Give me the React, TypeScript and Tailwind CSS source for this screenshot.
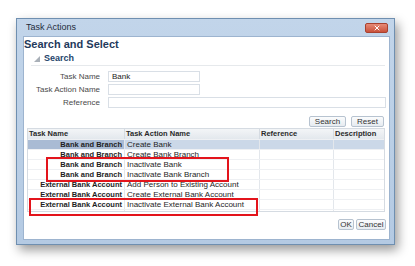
import { X } from 'lucide-react';

const rows = [
  { task: 'Bank and Branch', action: 'Create Bank', selected: true },
  { task: 'Bank and Branch', action: 'Create Bank Branch' },
  { task: 'Bank and Branch', action: 'Inactivate Bank' },
  { task: 'Bank and Branch', action: 'Inactivate Bank Branch' },
  { task: 'External Bank Account', action: 'Add Person to Existing Account' },
  { task: 'External Bank Account', action: 'Create External Bank Account' },
  { task: 'External Bank Account', action: 'Inactivate External Bank Account' },
];

function FormRow({ label, value, wide }: { label: string; value?: string; wide?: boolean }) {
  return (
    <div className="flex h-[13px] items-center">
      <div className="w-[77px] pr-px text-right text-[8px] leading-none text-[#4a4a4a]">{label}</div>
      <div
        className={
          'ml-[7px] flex h-[11px] items-center border border-[#d9dfe6] bg-white px-[3px] text-[8px] leading-none text-[#222] ' +
          (wide ? 'w-[278px]' : 'w-[92px]')
        }
      >
        {value}
      </div>
    </div>
  );
}

function Btn({ children, w }: { children: string; w: string }) {
  return (
    <div
      className={
        'flex h-[11px] items-center justify-center rounded-[2px] border border-[#b7c3d0] bg-gradient-to-b from-[#fbfcfd] to-[#e6ebf0] text-[8px] leading-none text-[#333] ' +
        w
      }
    >
      {children}
    </div>
  );
}

export default function App() {
  return (
    <div
      className="relative h-[266px] w-[415px] overflow-hidden bg-white pl-[16px] pt-[18px]"
      style={{ fontFamily: '"Liberation Sans", Arial, sans-serif' }}
    >
      {/* dialog frame */}
      <div className="flex h-[227px] w-[379px] flex-col border border-[#6f8fb0] bg-gradient-to-b from-[#c2d5ea] to-[#b4cae3] shadow-[3px_5px_10px_rgba(0,0,0,0.4)]">
        <div className="flex h-[17px] shrink-0 items-center justify-between pl-[9px] pr-[6px]">
          <span className="text-[9px] leading-none text-[#1d2b3a]">Task Actions</span>
          <div className="flex h-[10px] w-[23px] items-center justify-center rounded-[2px] border border-[#a8412f] bg-gradient-to-b from-[#e68a76] to-[#c9503a]">
            <X className="h-[8px] w-[8px] text-white" strokeWidth={3} />
          </div>
        </div>

        <div className="mb-[4px] ml-[6px] mr-[4px] flex flex-1 flex-col border border-[#9db4cf] bg-white">
          <div className="pt-px text-[11px] font-bold leading-[12px] text-[#1f3a5c]">Search and Select</div>

          <div className="ml-[7px] mr-[4px] mt-[4px] flex h-[12px] items-center border-b border-[#e6e9ec] pb-[2px]">
            <svg width="8" height="8" viewBox="0 0 8 8" className="ml-[2px]">
              <polygon points="7,1 7,7 1,7" fill="#a9b0b8" />
            </svg>
            <span className="ml-[3px] text-[9px] font-bold leading-none text-[#24446b]">Search</span>
          </div>

          <div className="mt-[4px] flex flex-col">
            <FormRow label="Task Name" value="Bank" />
            <FormRow label="Task Action Name" />
            <FormRow label="Reference" wide />
          </div>

          <div className="mr-[5px] mt-[7px] flex justify-end gap-[5px]">
            <Btn w="w-[37px]">Search</Btn>
            <Btn w="w-[33px]">Reset</Btn>
          </div>

          {/* results table */}
          <div className="ml-[3px] mt-px flex h-[84px] w-[358px] flex-col border border-[#d5dbe2]">
            <div className="grid h-[10px] shrink-0 grid-cols-[97px_135px_74px_1fr] bg-gradient-to-b from-[#f3f5f7] to-[#e3e8ed] text-[7.5px] font-bold leading-[10px] text-[#2a2a2a]">
              <div className="border-r border-[#d5dbe2] pl-px">Task Name</div>
              <div className="border-r border-[#d5dbe2] pl-px">Task Action Name</div>
              <div className="border-r border-[#d5dbe2] pl-px">Reference</div>
              <div className="pl-px">Description</div>
            </div>
            {rows.map((r, i) => (
              <div
                key={i}
                className={
                  'grid h-[10px] shrink-0 grid-cols-[97px_135px_74px_1fr] border-t border-[#eef0f3] leading-[9px] ' +
                  (r.selected ? 'bg-[#cbd8e8]' : 'bg-white')
                }
              >
                <div
                  className={
                    'overflow-hidden whitespace-nowrap border-r border-[#e3e7ec] pr-[2px] text-right text-[7.5px] font-bold text-[#1e1e1e] ' +
                    (r.selected ? 'bg-[#a9bbd4]' : '')
                  }
                >
                  {r.task}
                </div>
                <div className="overflow-hidden whitespace-nowrap border-r border-[#e3e7ec] pl-[2px] text-[8px] text-[#1e1e1e]">
                  {r.action}
                </div>
                <div className="border-r border-[#e3e7ec]" />
                <div />
              </div>
            ))}
            <div className="grid flex-1 grid-cols-[97px_135px_74px_1fr] border-t border-[#eef0f3]">
              <div className="border-r border-[#e3e7ec]" />
              <div className="border-r border-[#e3e7ec]" />
              <div className="border-r border-[#e3e7ec]" />
              <div />
            </div>
          </div>

          <div className="mr-[3px] mt-[7px] flex justify-end gap-[2px]">
            <Btn w="w-[16px]">OK</Btn>
            <Btn w="w-[30px]">Cancel</Btn>
          </div>
        </div>
      </div>

      {/* annotation boxes */}
      <div className="absolute left-[46px] top-[157px] h-[25px] w-[183px] border-2 border-[#e3141c]" />
      <div className="absolute left-[29px] top-[198px] h-[18px] w-[229px] border-2 border-[#e3141c]" />
    </div>
  );
}
